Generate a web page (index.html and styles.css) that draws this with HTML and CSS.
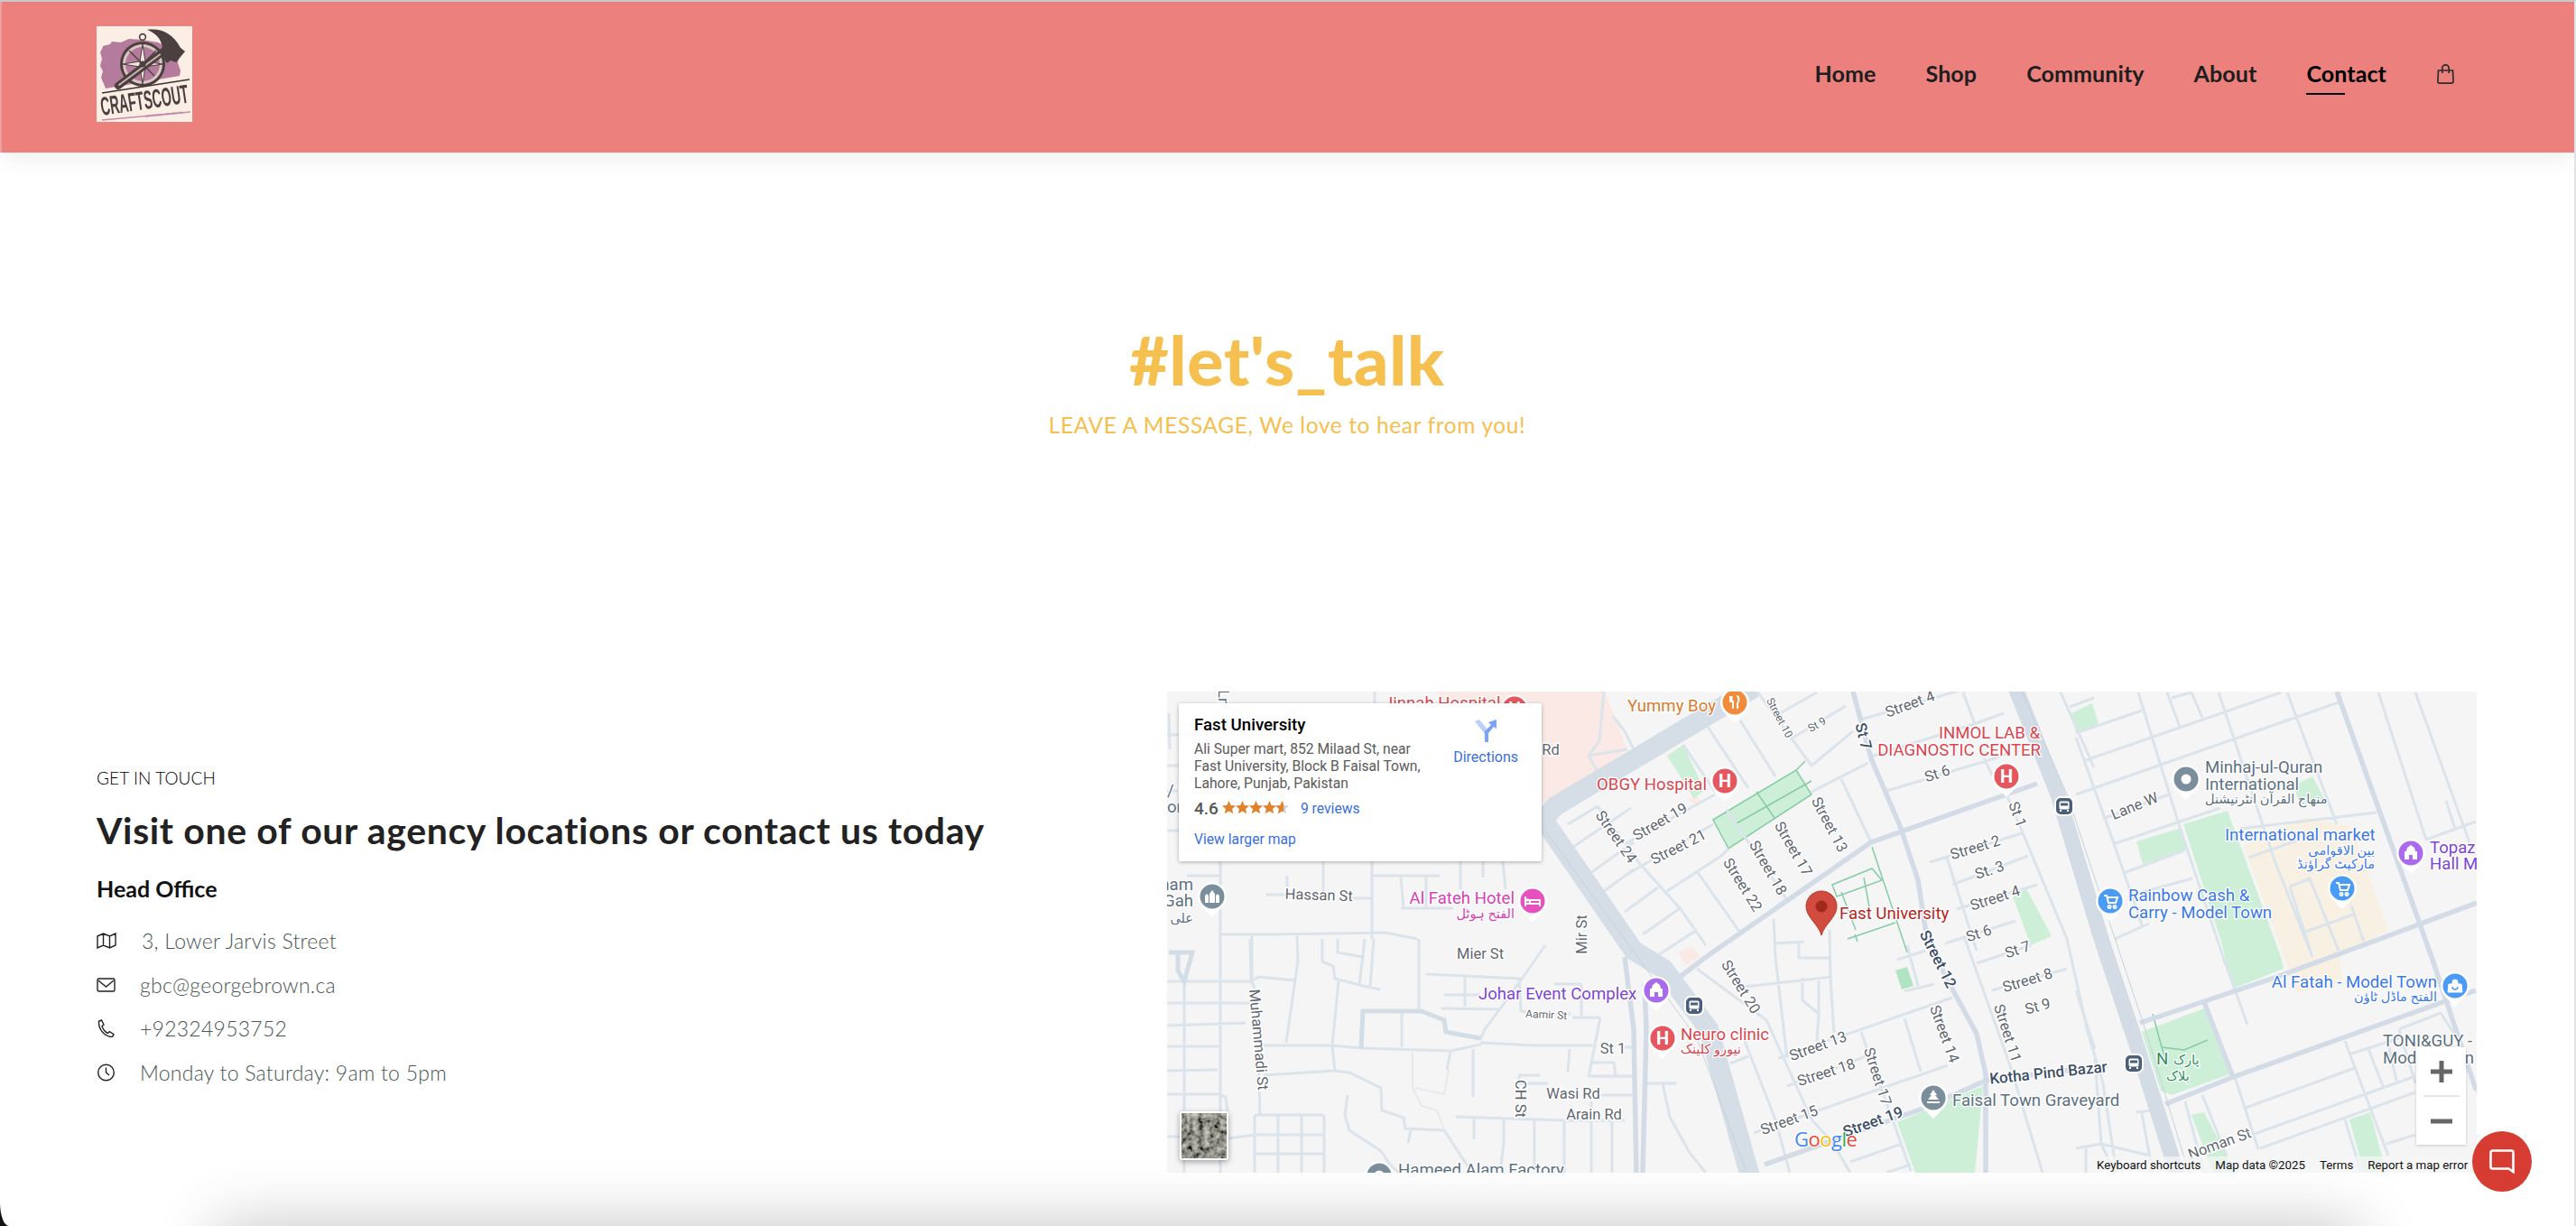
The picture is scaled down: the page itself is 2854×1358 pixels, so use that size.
FILE: index.html
```html
<!DOCTYPE html>
<html lang="en">
<head>
<meta charset="utf-8">
<title>Contact - CraftScout</title>
<link rel="stylesheet" href="styles.css">
</head>
<body>
<div class="window">
  <header class="site-header">
    <a class="logo" href="#">
      <svg viewBox="0 0 106 106" width="106" height="106" class="logo-svg">
        <rect width="106" height="106" fill="#fbeee5"/>
        <path d="M7 22l8-2 2-3 10 1 9-4 14 1 18 3 12 6 9 3 2 8-1 6 3 8-1 6-82 14-2-5-3-7 2-7-3-6 2-8-2-7 3-6z" fill="#b57b9c"/>
        <circle cx="51" cy="12" r="3.400" fill="none" stroke="#4c3f3f" stroke-width="1.600"/>
        <circle cx="51" cy="42" r="25" fill="#4c3f3f"/>
        <circle cx="51" cy="42" r="22" fill="#d9c7c4"/>
        <circle cx="51" cy="42" r="19" fill="#b57b9c"/>
        <path d="M51 20l3 19 19 3-19 3-3 19-3-19-19-3 19-3z" fill="#f3e6de" stroke="#4c3f3f" stroke-width="1"/>
        <path d="M36 27l13 13 2 2 13 13M66 27L36 57" stroke="#4c3f3f" stroke-width="1.400"/>
        <path d="M24 66L82 22" stroke="#4c3f3f" stroke-width="8" stroke-linecap="round"/>
        <path d="M25 65L80 24" stroke="#c9b6b2" stroke-width="2" stroke-linecap="round"/>
        <path d="M56 4c14-2 28 3 37 20l5 4-10 12-6-2-4 3-8-11 3-5C72 14 66 8 56 4z" fill="#4c3f3f"/>
        <circle cx="51" cy="42" r="3.600" fill="#4c3f3f"/>
        <path d="M6 74L103 59" stroke="#3f3434" stroke-width="1.600"/>
        <text class="logo-word" x="6" y="99" transform="rotate(-8.500 6 99)" textLength="98" lengthAdjust="spacingAndGlyphs">CRAFTSCOUT</text>
        <path d="M6 104L104 95" stroke="#c58bb0" stroke-width="1.400"/>
        <text class="logo-tag" x="54" y="101" transform="rotate(-6 54 101)">ADVENTURE AND WEALTH</text>
      </svg>
    </a>
    <nav class="nav">
      <a href="#">Home</a>
      <a href="#">Shop</a>
      <a href="#">Community</a>
      <a href="#">About</a>
      <a href="#" class="active">Contact</a>
      <a href="#" class="bag" aria-label="Cart">
        <svg viewBox="0 0 21 22" width="21" height="22" fill="none" stroke="#2c2c2c" stroke-width="1.700"><path d="M2.500 7h16l.6 12.500a1.600 1.600 0 0 1-1.600 1.600H3.500a1.600 1.600 0 0 1-1.600-1.600z"/><path d="M6.800 10V4.500a3.700 3.700 0 0 1 7.400 0V10"/></svg>
      </a>
    </nav>
  </header>

  <section class="hero">
    <h1>#let's_talk</h1>
    <p>LEAVE A MESSAGE, We love to hear from you!</p>
  </section>

  <section class="contact">
    <div class="details">
      <span class="eyebrow">GET IN TOUCH</span>
      <h2>Visit one of our agency locations or contact us today</h2>
      <h3>Head Office</h3>
      <ul class="info">
        <li class="addr"><svg viewBox="0 0 22 18" width="22" height="18" fill="none" stroke="#222" stroke-width="1.400"><path d="M1 4l6.500-3 7 3 6.500-3v13l-6.500 3-7-3L1 17zM7.500 1v13M14.500 4v13"/></svg><span>3, Lower Jarvis Street</span></li>
        <li><svg viewBox="0 0 22 18" width="22" height="18" fill="none" stroke="#222" stroke-width="1.400"><rect x="1" y="2" width="19" height="14" rx="1.500"/><path d="M2 4l8.500 7L19 4"/></svg><span>gbc@georgebrown.ca</span></li>
        <li><svg viewBox="0 0 22 20" width="22" height="20" fill="none" stroke="#222" stroke-width="1.400"><path d="M2 2.500L5.500 1l2.500 5-2 1.500c1 3.500 3.500 6.500 6.500 8l1.800-1.800 4.700 3-1.500 2.800c-8 .5-15.500-8-15-17z"/></svg><span>+92324953752</span></li>
        <li><svg viewBox="0 0 22 20" width="22" height="20" fill="none" stroke="#222" stroke-width="1.400"><circle cx="10.500" cy="10" r="8.800"/><path d="M10.500 4.500V10l3.500 3"/></svg><span>Monday to Saturday: 9am to 5pm</span></li>
      </ul>
    </div>

    <div class="map">
      <svg class="map-canvas" viewBox="1293 766 1451 533" width="1451" height="533">
        <defs>
          <g id="pin"><path d="M0 23L-11 12A16 16 0 1 1 11 12Z" fill="#fff"/></g>
          <g id="p-h"><use href="#pin"/><circle r="13.500" fill="#e5565f"/><text class="pin-h" y="7">H</text></g>
          <g id="p-blue"><use href="#pin"/><circle r="13.500" fill="#4a9bf6"/><path d="M-7-6h3l2 8h8l2-6H-3M-1 5a1.500 1.500 0 1 0 .1 0M5 5a1.500 1.500 0 1 0 .1 0" fill="none" stroke="#fff" stroke-width="2"/></g>
          <g id="p-purple"><use href="#pin"/><circle r="13.500" fill="#aa6aec"/><path d="M-7 7V-2h2l1-4 4-3 4 3 1 4h2V7H2V2h-4v5z" fill="#fff"/></g>
          <g id="bus"><rect x="-10" y="-10" width="20" height="20" rx="6" fill="#4a607a" stroke="#fff" stroke-width="2"/><rect x="-5.500" y="-5.500" width="11" height="9" rx="1.500" fill="#fff"/><rect x="-4" y="-3.500" width="8" height="3" fill="#4a607a"/><path d="M-4 4v2M4 4v2" stroke="#fff" stroke-width="2"/></g>
        </defs>
        <rect x="1293" y="766" width="1451" height="533" fill="#f5f5f5"/>

        <!-- areas -->
        <path class="pink" d="M1593 766H1778L1803 830 1733 883 1700 890 1600 780z"/>
        <path class="pink" d="M1870 885l8-4 7 7-6 5zM1860 1055l14-7 10 11-16 10z"/>
        <path class="tan" d="M2486 937L2553 905 2605 915 2646 1030 2592 1060 2596 1088 2545 1100z"/>
        <path class="green" d="M1898 908L1990 853 2007 880 1915 940zM1847 837L1865 825 1888 875 1877 885zM2230 993L2245 984 2273 1037 2250 1047zM2102 1243L2197 1203 2188 1299H2122zM2295 790L2318 779 2325 802 2300 812zM2419 913L2468 898 2527 1060 2530 1073 2474 1095 2460 1040zM2367 932L2417 917 2422 942 2374 957zM2541 870L2562 860 2577 888 2548 892zM2373 1143L2442 1117 2470 1190 2406 1213 2394 1208zM2428 1235L2442 1232 2477 1299H2452zM2603 1240L2626 1232 2644 1299H2619z"/>
        <path class="green-d" d="M2100 1075L2113 1071 2120 1092 2107 1096z"/>
        <path class="park-line" d="M1898 908L1990 853 2007 880 1915 940zM1913 897L1932 925M1946 877L1966 906M1924 912L2007 865M1990 853L2000 843M2074 938L2113 1055M2030 980L2074 962 2085 975 2035 993zM2040 988L2056 1030M2065 972L2072 1010M2047 1040L2100 1022M2055 1035L2058 1043M2385 1123L2395 1160 2420 1163 2446 1152M2395 1160L2400 1175"/>

        <!-- thin roads -->
        <path class="road" d="M1293 1087H1386L1395 1082 1435 1086M1293 1111H1385M1293 1136L1380 1133M1293 1159H1350M1293 1186L1349 1185M1293 1212H1350L1358 1215 1360 1231M1293 1259H1310M1361 1261L1390 1257H1465M1390 1299V1238Q1390 1235 1393 1235H1463Q1467 1235 1467 1239V1299M1416 1235V1299M1442 1235V1299M1389 1278H1466M1385 1040L1386 1085 1392 1100 1396 1235M1437 1035L1438 1064 1425 1155M1398 1158H1476L1508 1161 1608 1164 1640 1157 1642 1155 1700 1158H1765M1800 1160H1810M1483 1087L1476 1158 1479 1186M1465 1040V1065L1477 1070 1479 1084 1510 1092 1529 1096M1482 1040V1055L1510 1060M1512 1040L1506 1091M1522 1040L1518 1093M1553 1120V1160M1572 1040V1118M1623 1080V1115M1580 1079L1685 1084M1600 1102H1640M1597 1117L1660 1118M1712 1047L1687 1083 1660 1120 1645 1140 1640 1152M1683 1083L1685 1120 1700 1123H1740M1773 1127H1742M1752 1090V1125M1722 1090H1752M1773 1127L1760 1193M1762 1192H1810M1763 1177H1788L1790 1192M1739 1162L1737 1188M1632 1162V1215M1607 1165L1603 1185M1400 1191L1478 1186 1495 1188 1530 1205 1531 1230 1555 1238 1557 1250 1600 1252 1625 1290 1632 1299M1493 1213L1490 1235 1495 1252 1530 1275 1540 1290 1550 1299M1563 1252L1560 1266M1613 1237L1733 1241H1800M1633 1237V1262M1666 1240V1266L1663 1290M1700 1241V1299M1733 1241V1299M1763 1220V1299M1786 1240V1299M1683 1191H1706M1683 1191V1200H1715M1770 1213H1810M1521 970H1595M1520 954V1040M1552 970L1555 1006M1580 970V1006M1552 1006H1610M1618 954V985M1643 954V972M1665 954L1668 985M1466 954V990M1426 970V990M1315 970H1353M1403 991H1425M1498 995H1520M1352 1035L1405 1035 1535 1033 1570 1040M1387 1035V1090M1352 950V1299M1312 1087V1230M1312 1285V1299M1295 790L1296 830M1293 814H1306M1293 848H1306M1293 876H1306M1293 920H1306M1523 766V779M1760 837L1770 855M1777 766L1772 820 1760 837M1760 837L1803 830M1787 793L1800 810 1810 830M1737 913L1770 893M1740 940L1807 895M1762 967L1810 933M1777 987L1810 963M1770 893L1817 957 1862 1007 1890 1047M1880 965L1928 1033M1913 897L1980 997M1865 825L1900 877M1892 805L1937 873M1928 798L1967 860M1947 766L2007 848M2007 848L2053 810M1985 818L2045 782M1972 790L2013 767M2007 877L2070 845M2040 863L2073 933M1800 935L1900 880M1800 970L1898 913M1847 987L1907 948 1915 940M1820 1035L1860 1007M1837 1058L1880 1030M1800 1010L1837 983M1965 1017L1967 1060 1975 1130 1980 1172M1966 1045L1999 1043M1993 1045V1061H2027M2027 1030L2028 1083 2032 1145M1933 1093L2030 1082M1997 1083V1108L2015 1123 2013 1153M2015 1083V1123M1970 1172L2163 1105M1980 1203L2067 1170M2062 1143L2117 1297M1943 1255L2158 1180M2110 1128L2128 1187M2110 1098L2143 1090M2102 1063L2133 1053M2113 1047L2125 1092M1880 1073L1957 1130 2007 1240 2030 1265 2050 1299M1917 1178L1937 1170M1933 1153L1967 1240 1983 1299M2050 1287L2107 1267M2090 1299L2117 1290M1823 1200H1858M1842 1200L1850 1237 1872 1277 1890 1299M2207 1097L2290 1073M2190 1067L2250 1047M2177 1040L2227 1180 2263 1299M2157 950L2190 1053M2138 955L2240 923M2163 980L2247 948M2168 1007L2257 980M2155 1045L2233 1020M2240 920L2290 1040 2313 1143 2330 1200 2345 1299M2223 880L2240 920M2087 877L2210 840 2227 833M2062 797L2177 763M2175 767L2188 802M2073 838L2187 802 2220 790M2198 840L2213 870M2283 767L2320 850M2293 783L2320 773M2300 812L2373 787M2369 767L2413 910 2463 1060 2490 1135M2401 767L2415 805M2406 773L2428 767 2440 795M2311 842L2527 767M2300 880L2591 778M2458 767L2520 953 2562 1060M2534 767L2589 913M2300 817L2343 937 2374 1027M2330 907L2403 880M2341 935L2460 895M2481 918L2633 900M2491 950L2548 930M2353 967L2420 942M2367 990L2429 973M2343 1040L2381 1023M2537 982L2559 973 2591 1053M2537 982L2562 1060M2555 1032L2607 1013M2605 1003L2619 1043M2635 767L2688 930M2676 767L2736 933M2688 930L2743 910M2710 887L2720 918M2300 1097L2321 1162M2366 1232L2385 1230M2373 1233L2385 1299M2321 1173L2328 1267 2343 1299M2300 1272L2328 1267 2382 1280M2311 1270V1299M2421 1220L2442 1299M2440 1213L2467 1280M2488 1227L2609 1183M2476 1193L2502 1273M2495 1257L2676 1192M2504 1272L2676 1210M2598 1153L2646 1280M2605 1167L2658 1150M2624 1162L2640 1203M2646 1156L2655 1197M2598 1240L2616 1299M2644 1267L2676 1257M2658 1140L2704 1122 2722 1150 2744 1210M2658 1140L2676 1200"/>
        <path class="road-pale" d="M1565 1165V1205L1575 1225 1592 1230 1600 1252M1568 1205L1600 1212 1605 1185"/>
        <path class="road-mid" d="M1508 1162L1510 1120H1575L1600 1130 1602 1143 1612 1145 1640 1150M1295 1055H1321L1312 1087 1305 1075V1055"/>

        <!-- main roads -->
        <path class="road-md" d="M1860 1083L1890 1060 2073 933 2257 868M2053 766L2073 840 2105 915 2125 975 2135 1040 2160 1090 2190 1145 2200 1190 2200 1299M1955 1290L2133 1227 2200 1197 2335 1180M2371 1133L2520 1083 2637 1040 2744 1000M2399 1223L2474 1193 2743 1097M2442 1110L2474 1193M2589 766L2694 1060 2743 1207"/>
        <path class="road-xl" d="M1943 762L1723 893 1710 908 1810 1053 1843 1073 1893 1140 1939 1303"/>
        <path class="road-lg" d="M2233 762L2280 880 2328 1040 2367 1157 2413 1303"/>
        <path class="road-md" d="M1800 1060L1810 1140 1813 1299M1822 1090L1824 1140 1820 1299"/>
        <path class="road-line" d="M2240 766L2290 880 2380 1150 2425 1299M1712 920L1880 1150 1935 1299"/>

        <!-- street labels -->
        <g class="st">
          <text transform="translate(2118 785) rotate(-20)">Street 4</text>
          <text class="sm" transform="translate(1968 797) rotate(62)">Street 10</text>
          <text class="sm" transform="translate(2015 806) rotate(-30)">St 9</text>
          <text transform="translate(2148 862) rotate(-18)">St 6</text>
          <text transform="translate(2230 904) rotate(70)">St 1</text>
          <text transform="translate(1842 915) rotate(-30)">Street 19</text>
          <text transform="translate(1862 943) rotate(-27)">Street 21</text>
          <text transform="translate(1786 930) rotate(55)">Street 24</text>
          <text transform="translate(1926 983) rotate(58)">Street 22</text>
          <text transform="translate(1954 964) rotate(60)">Street 18</text>
          <text transform="translate(1982 943) rotate(60)">Street 17</text>
          <text transform="translate(2022 916) rotate(62)">Street 13</text>
          <text transform="translate(2190 944) rotate(-17)">Street 2</text>
          <text transform="translate(2206 969) rotate(-18)">St. 3</text>
          <text transform="translate(2212 1000) rotate(-18)">Street 4</text>
          <text transform="translate(2194 1039) rotate(-18)">St 6</text>
          <text transform="translate(2237 1057) rotate(-18)">St 7</text>
          <text transform="translate(2248 1091) rotate(-17)">Street 8</text>
          <text transform="translate(2259 1120) rotate(-15)">St 9</text>
          <text transform="translate(2149 1147) rotate(70)">Street 14</text>
          <text transform="translate(2219 1146) rotate(72)">Street 11</text>
          <text transform="translate(1924 1096) rotate(58)">Street 20</text>
          <text transform="translate(2016 1164) rotate(-20)">Street 13</text>
          <text transform="translate(2025 1193) rotate(-18)">Street 18</text>
          <text transform="translate(2075 1194) rotate(72)">Street 17</text>
          <text transform="translate(1984 1246) rotate(-20)">Street 15</text>
          <text transform="translate(2461 1272) rotate(-20)">Noman St</text>
          <text transform="translate(2367 898) rotate(-22)">Lane W</text>
          <text transform="translate(1461 997) rotate(2)">Hassan St</text>
          <text transform="translate(1640 1062)">Mier St</text>
          <text transform="translate(1758 1035) rotate(-90)">Mir St</text>
          <text transform="translate(1389 1152) rotate(85)">Muhammadi St</text>
          <text class="sm" transform="translate(1713 1128) rotate(3)">Aamir St</text>
          <text transform="translate(1787 1167)">St 1</text>
          <text transform="translate(1679 1217) rotate(90)">CH St</text>
          <text transform="translate(1743 1217)">Wasi Rd</text>
          <text transform="translate(1766 1240)">Arain Rd</text>
          <text transform="translate(1718 836)">Rd</text>
          <text transform="translate(1350 773) rotate(90)">Ln</text>
        </g>
        <g class="st dark">
          <text transform="translate(2059 817) rotate(75)">St 7</text>
          <text transform="translate(2142 1065) rotate(63)">Street 12</text>
          <text transform="translate(2077 1248) rotate(-20)">Street 19</text>
          <text transform="translate(2270 1194) rotate(-6)">Kotha Pind Bazar</text>
        </g>

        <!-- place labels -->
        <g class="poi">
          <text class="orange" x="1803" y="788">Yummy Boy</text>
          <text class="red end" x="1891" y="875">OBGY Hospital</text>
          <text class="red end" x="2260" y="818">INMOL LAB &amp;</text>
          <text class="red end" x="2261" y="837">DIAGNOSTIC CENTER</text>
          <text class="red" x="1533" y="785">Jinnah Hospital</text>
          <text class="marker" x="2038" y="1018">Fast University</text>
          <text class="slate" x="2443" y="856">Minhaj-ul-Quran</text>
          <text class="slate" x="2443" y="875">International</text>
          <text class="slate ar" x="2443" y="890">منهاج القرآن انٹرنیشنل</text>
          <text class="blue" x="2465" y="931">International market</text>
          <text class="blue ar end" x="2631" y="947">بین الاقوامی</text>
          <text class="blue ar end" x="2631" y="962">مارکیٹ گراؤنڈ</text>
          <text class="purple" x="2692" y="945">Topaz</text>
          <text class="purple" x="2692" y="963">Hall Ma</text>
          <text class="blue" x="2358" y="998">Rainbow Cash &amp;</text>
          <text class="blue" x="2358" y="1017">Carry - Model Town</text>
          <text class="blue end" x="2700" y="1094">Al Fatah - Model Town</text>
          <text class="blue ar end" x="2700" y="1109">الفتح ماڈل ٹاؤن</text>
          <text class="slate" x="2640" y="1159">TONI&amp;GUY -</text>
          <text class="slate" x="2640" y="1178">Model Town</text>
          <text class="hotel end" x="1678" y="1001">Al Fateh Hotel</text>
          <text class="hotel ar end" x="1678" y="1017">الفتح ہوٹل</text>
          <text class="purple" x="1638" y="1107">Johar Event Complex</text>
          <text class="red" x="1862" y="1152">Neuro clinic</text>
          <text class="red ar" x="1862" y="1167">نیورو کلینک</text>
          <text class="slate" x="2163" y="1225">Faisal Town Graveyard</text>
          <text class="parkname" x="2389" y="1179">N</text>
          <text class="parkname ar" x="2408" y="1179">پارک</text>
          <text class="parkname ar" x="2400" y="1197">بلاک</text>
          <text class="slate end" x="1322" y="986">Imam</text>
          <text class="slate end" x="1322" y="1004">Gah</text>
          <text class="slate ar end" x="1322" y="1022">علی</text>
          <text class="slate" x="1549" y="1302">Hameed Alam Factory</text>
          <text class="slate" x="1293" y="882">/ C</text>
          <text class="slate" x="1293" y="900">or</text>
        </g>

        <!-- pins -->
        <use href="#p-h" x="1678" y="785"/>
        <use href="#p-h" x="1911" y="865"/>
        <use href="#p-h" x="2223" y="860"/>
        <use href="#p-h" x="1842" y="1150"/>
        <g transform="translate(1922 778)"><use href="#pin"/><circle r="13.500" fill="#f28b3b"/><path d="M-5-7v6h3v8M-3.500-7v5M2-7c3 0 3 6 1 8v6" fill="none" stroke="#fff" stroke-width="2"/></g>
        <g transform="translate(1343 993)"><use href="#pin"/><circle r="13.500" fill="#7b8e9c"/><path d="M-8 7V-1l2-2 2 2V7zM-3 7V-3l3-4 3 4V7zM4 7V-1l2-2 2 2V7z" fill="#fff"/></g>
        <g transform="translate(1698 998)"><use href="#pin"/><circle r="13.500" fill="#e650bf"/><path d="M-8-5v11M-8 3H8V6M8 3V-1H-3V3" fill="none" stroke="#fff" stroke-width="2"/><circle cx="-5.500" cy="-1" r="1.800" fill="#fff"/></g>
        <use href="#p-purple" x="1835" y="1097"/>
        <use href="#p-purple" x="2671" y="945"/>
        <g transform="translate(2142 1216)"><use href="#pin"/><circle r="13.500" fill="#7b8e9c"/><path d="M0-9l4 6H2l4 5H-6l4-5h-2zM-7 4H7V6H-7z" fill="#fff"/></g>
        <g transform="translate(2422 863)"><use href="#pin"/><circle r="13.500" fill="#7b8e9c"/><circle r="5.500" fill="#fff"/></g>
        <g transform="translate(1528 1302)"><use href="#pin"/><circle r="13.500" fill="#7b8e9c"/><circle r="5.500" fill="#fff"/></g>
        <use href="#p-blue" x="2338" y="998"/>
        <use href="#p-blue" x="2595" y="984"/>
        <g transform="translate(2720 1092)"><use href="#pin"/><circle r="13.500" fill="#4a9bf6"/><path d="M-7-2H7L8 7H-8zM-3-2v-2a3 3 0 0 1 6 0v2" fill="#fff" stroke="#fff"/><path d="M-3 1a3 3 0 0 0 6 0" fill="none" stroke="#4a9bf6" stroke-width="1.500"/></g>
        <use href="#bus" x="1877" y="1114"/>
        <use href="#bus" x="2287" y="893"/>
        <use href="#bus" x="2364" y="1178"/>
        <path d="M2018 1036c-3-12-17-20-17-32a17 17 0 0 1 34 0c0 12-14 20-17 32z" fill="#d14c3e" stroke="#b5382c"/>
        <circle cx="2018" cy="1004" r="6.500" fill="#9f2a1c"/>

        <text class="google" x="1988" y="1270"><tspan fill="#4285f4">G</tspan><tspan fill="#ea4335">o</tspan><tspan fill="#fbbc05">o</tspan><tspan fill="#4285f4">g</tspan><tspan fill="#34a853">l</tspan><tspan fill="#ea4335">e</tspan></text>
      </svg>

      <div class="place-card">
        <div class="place-main">
          <div class="place-name">Fast University</div>
          <div class="place-addr">Ali Super mart, 852 Milaad St, near<br>Fast University, Block B Faisal Town,<br>Lahore, Punjab, Pakistan</div>
          <div class="place-rating">
            <b>4.6</b>
            <svg viewBox="0 0 74 16" width="74" height="16" class="stars">
              <defs>
                <linearGradient id="half"><stop offset="60%" stop-color="#e0812c"/><stop offset="60%" stop-color="#cfcfcf"/></linearGradient>
                <path id="star" d="M7.500 0l2.200 5 5.300.5-4 3.500 1.200 5.300-4.700-2.800-4.700 2.800L4 9 0 5.500 5.300 5z"/>
              </defs>
              <use href="#star" x="0" fill="#e0812c"/><use href="#star" x="15" fill="#e0812c"/><use href="#star" x="30" fill="#e0812c"/><use href="#star" x="45" fill="#e0812c"/><use href="#star" x="59" fill="url(#half)"/>
            </svg>
            <a href="#">9 reviews</a>
          </div>
          <a class="larger" href="#">View larger map</a>
        </div>
        <a class="directions" href="#">
          <svg viewBox="0 0 24 25" width="24" height="25"><path d="M0 2l5-2 9 11-3 5z" fill="#bccffb"/><path d="M11 25V13L18 6l-3-3 9-3v10l-3-2-6 7v10z" fill="#7aa2f7"/></svg>
          <span>Directions</span>
        </a>
      </div>

      <div class="sat-thumb">
        <svg width="50" height="50"><defs><filter id="sat" x="0" y="0" width="100%" height="100%"><feTurbulence type="fractalNoise" baseFrequency="0.16" numOctaves="3" seed="6"/><feColorMatrix values="0.9 0 0 0 0 0.9 0 0 0 0 0.8 0 0 0 0 0 0 0 0 1"/><feComponentTransfer><feFuncR type="linear" slope="1.100" intercept="-0.22"/><feFuncG type="linear" slope="1.100" intercept="-0.22"/><feFuncB type="linear" slope="1.100" intercept="-0.2"/></feComponentTransfer><feGaussianBlur stdDeviation="0.5"/></filter></defs><rect width="50" height="50" filter="url(#sat)"/></svg>
      </div>

      <div class="zoom-ctl">
        <button class="zoom-btn" aria-label="Zoom in"><svg viewBox="0 0 24 24" width="24" height="24"><path d="M9.500 0h5v9.500H24v5h-9.500V24h-5v-9.500H0v-5h9.500z" fill="#666"/></svg></button>
        <span class="zoom-sep"></span>
        <button class="zoom-btn" aria-label="Zoom out"><svg viewBox="0 0 24 24" width="24" height="24"><path d="M0 9.500h24v5H0z" fill="#666"/></svg></button>
      </div>

      <div class="attrib">
        <span>Keyboard shortcuts</span><span>Map data ©2025</span><span>Terms</span><span>Report a map error</span>
      </div>
    </div>
  </section>

  <div class="below-fold"></div>
</div>

<button class="chat" aria-label="Chat">
  <svg viewBox="0 0 28 27" width="28" height="27" fill="none" stroke="#fff" stroke-width="2.600"><path d="M3.500 1.500h21a2 2 0 0 1 2 2V25l-5-3.500H3.500a2 2 0 0 1-2-2v-16a2 2 0 0 1 2-2z"/></svg>
</button>
</body>
</html>
```

FILE: styles.css
```css
* { box-sizing: border-box; }
html { height: 1358px; overflow: hidden; background: #111; }
body { margin: 0; height: 1358px; overflow: hidden; font-family: "Lato", "Liberation Sans", sans-serif; color: #222; }
a { color: inherit; text-decoration: none; }

.window {
  height: 1358px;
  overflow: hidden;
  background: #fff;
  border-top: 2px solid #c9c9c9;
  border-right: 2px solid #e3e3e3;
  border-bottom-left-radius: 10px 26px;
}

/* header */
.site-header {
  position: relative;
  z-index: 2;
  height: 167px;
  display: flex;
  align-items: flex-start;
  justify-content: space-between;
  padding: 27px 132px 0 105px;
  background: #eb807d;
  border-left: 2px solid #f0a09d;
  box-shadow: 0 6px 24px rgba(0, 0, 0, .07);
}
.logo { display: block; width: 106px; height: 106px; }
.logo-svg { display: block; filter: blur(.35px); }
.logo-word { font: 700 29px "Liberation Sans", sans-serif; fill: #4c3f3f; }
.logo-tag { font: 700 3.200px "Liberation Sans", sans-serif; fill: #b57b9c; }
.nav { display: flex; align-items: flex-start; gap: 55px; padding-top: 34px; font-size: 25px; font-weight: 700; letter-spacing: .1px; color: #1d1d1d; line-height: 36px; }
.nav a { display: block; position: relative; }
.nav .active { color: #000; }
.nav .active::after { content: ""; position: absolute; left: 0; top: 40px; width: 43px; height: 2px; background: #000; }
.bag { padding-top: 8px; line-height: 0; }

/* hero */
.hero { height: 429px; padding-top: 193px; text-align: center; color: #f5c04f; }
.hero h1 { margin: 0; font-size: 75px; line-height: 72px; font-weight: 900; letter-spacing: .8px; }
.hero p { margin: 22px 0 0; font-size: 24.500px; line-height: 30px; font-weight: 400; letter-spacing: .62px; }

/* contact */
.contact { height: 533px; margin-top: 168px; display: flex; justify-content: space-between; padding: 0 108px 0 107px; }
.details { padding-top: 84px; }
.eyebrow { display: block; font-size: 19px; line-height: 24px; font-weight: 300; letter-spacing: .1px; color: #000; }
.details h2 { margin: 22px 0 0; font-size: 41px; line-height: 48px; font-weight: 700; letter-spacing: .63px; color: #222; }
.details h3 { margin: 24px 0 0; font-size: 25px; line-height: 32px; font-weight: 700; color: #111; }
.info { list-style: none; margin: 18px 0 0; padding: 0; }
.info li { display: flex; align-items: center; gap: 26px; height: 48.500px; font-size: 23px; font-weight: 300; letter-spacing: .25px; color: #4a5653; }
.info li.addr { gap: 28px; }
.info svg { flex: none; }

/* map */
.map { position: relative; width: 1451px; height: 533px; overflow: hidden; flex: none; }
.map-canvas { display: block; }
.pink { fill: #fbe9e6; }
.tan { fill: #f8f1e3; }
.green { fill: #cdefd8; }
.green-d { fill: #b1e4c3; }
.park-line { fill: none; stroke: #86cca6; stroke-width: 1.500; }
.road { fill: none; stroke: #dbe3eb; stroke-width: 3; }
.road-pale { fill: none; stroke: #e6eaee; stroke-width: 2; }
.road-mid { fill: none; stroke: #d3dde6; stroke-width: 5; }
.road-md { fill: none; stroke: #d3dce6; stroke-width: 5.500; }
.road-lg { fill: none; stroke: #d3dce5; stroke-width: 17; }
.road-xl { fill: none; stroke: #d5dee6; stroke-width: 22; }
.road-line { fill: none; stroke: #c6d1db; stroke-width: 1; }

.st text { font: 400 16.500px Roboto, "DejaVu Sans", sans-serif; fill: #5f6771; stroke: #fff; stroke-width: 3px; paint-order: stroke; text-anchor: middle; }
.st text.sm { font-size: 12px; }
.st.dark text { font-weight: 500; fill: #3c4f66; font-size: 17px; }
.poi text { font: 400 18.600px Roboto, "DejaVu Sans", sans-serif; stroke: #fff; stroke-width: 2.500px; paint-order: stroke; }
.poi text.ar { font-size: 14.500px; }
.poi text.end { text-anchor: end; }
.poi .orange { fill: #d97a2e; }
.poi .red { fill: #d9454f; }
.poi .marker { fill: #b3261e; }
.poi .slate { fill: #5c7080; }
.poi .blue { fill: #3a78e8; }
.poi .purple { fill: #7c44d4; }
.poi .hotel { fill: #d740b2; }
.poi .parkname { fill: #2f8f60; }
.pin-h { font: 700 20px Roboto, sans-serif; fill: #fff; text-anchor: middle; }
.google { font: 500 22px "Open Sans", sans-serif; stroke: #fff; stroke-width: 2px; paint-order: stroke; letter-spacing: -.5px; }

.place-card {
  position: absolute;
  left: 13px;
  top: 13px;
  width: 402px;
  height: 175px;
  display: flex;
  justify-content: space-between;
  padding: 12px 26px 0 17px;
  background: #fff;
  border-radius: 2px;
  box-shadow: 0 1px 4px rgba(0, 0, 0, .3);
  font-family: Roboto, sans-serif;
}
.place-name { font-size: 18.700px; line-height: 24px; font-weight: 500; color: #000; }
.place-addr { margin-top: 5px; font-size: 15.700px; line-height: 19px; color: #5b5b5b; }
.place-rating { display: flex; align-items: center; margin-top: 5px; height: 26px; font-size: 15.700px; }
.place-rating b { font-size: 19px; font-weight: 500; color: #555; margin-right: 4px; }
.place-rating a { margin-left: 13px; color: #3a6fe0; }
.stars { display: block; }
.larger { display: block; margin-top: 12px; font-size: 15.700px; line-height: 20px; color: #3a6fe0; }
.directions { display: flex; flex-direction: column; align-items: center; gap: 7px; padding-top: 6px; font-size: 16px; color: #3a6fe0; }

.sat-thumb { position: absolute; left: 14px; top: 465px; width: 54px; height: 54px; border: 2px solid #fff; border-radius: 3px; background: #666; box-shadow: 0 2px 6px rgba(0, 0, 0, .35); overflow: hidden; }
.sat-thumb svg { display: block; }

.zoom-ctl { position: absolute; left: 1384px; top: 394px; width: 55px; height: 108px; display: flex; flex-direction: column; align-items: center; background: #fff; box-shadow: 0 1px 3px rgba(0, 0, 0, .2); }
.zoom-btn { flex: 1; width: 100%; display: flex; align-items: center; justify-content: center; border: 0; padding: 0; background: transparent; }
.zoom-sep { width: 40px; height: 2px; background: #e6e6e6; }

.attrib { position: absolute; right: 0; bottom: 0; height: 18px; width: 428px; display: flex; gap: 16px; align-items: center; padding-left: 7px; background: rgba(245, 245, 245, .75); font: 400 13.300px Roboto, sans-serif; color: #111; white-space: nowrap; }

/* next section, just below the fold */
.below-fold { height: 120px; margin: 59px 240px 0; background: #fff; box-shadow: 0 0 70px rgba(0, 0, 0, .24); }

.chat { position: fixed; right: 49px; bottom: 38px; width: 66px; height: 67px; display: flex; align-items: center; justify-content: center; border: 0; padding: 0; border-radius: 50%; background: #d63c32; }
```
